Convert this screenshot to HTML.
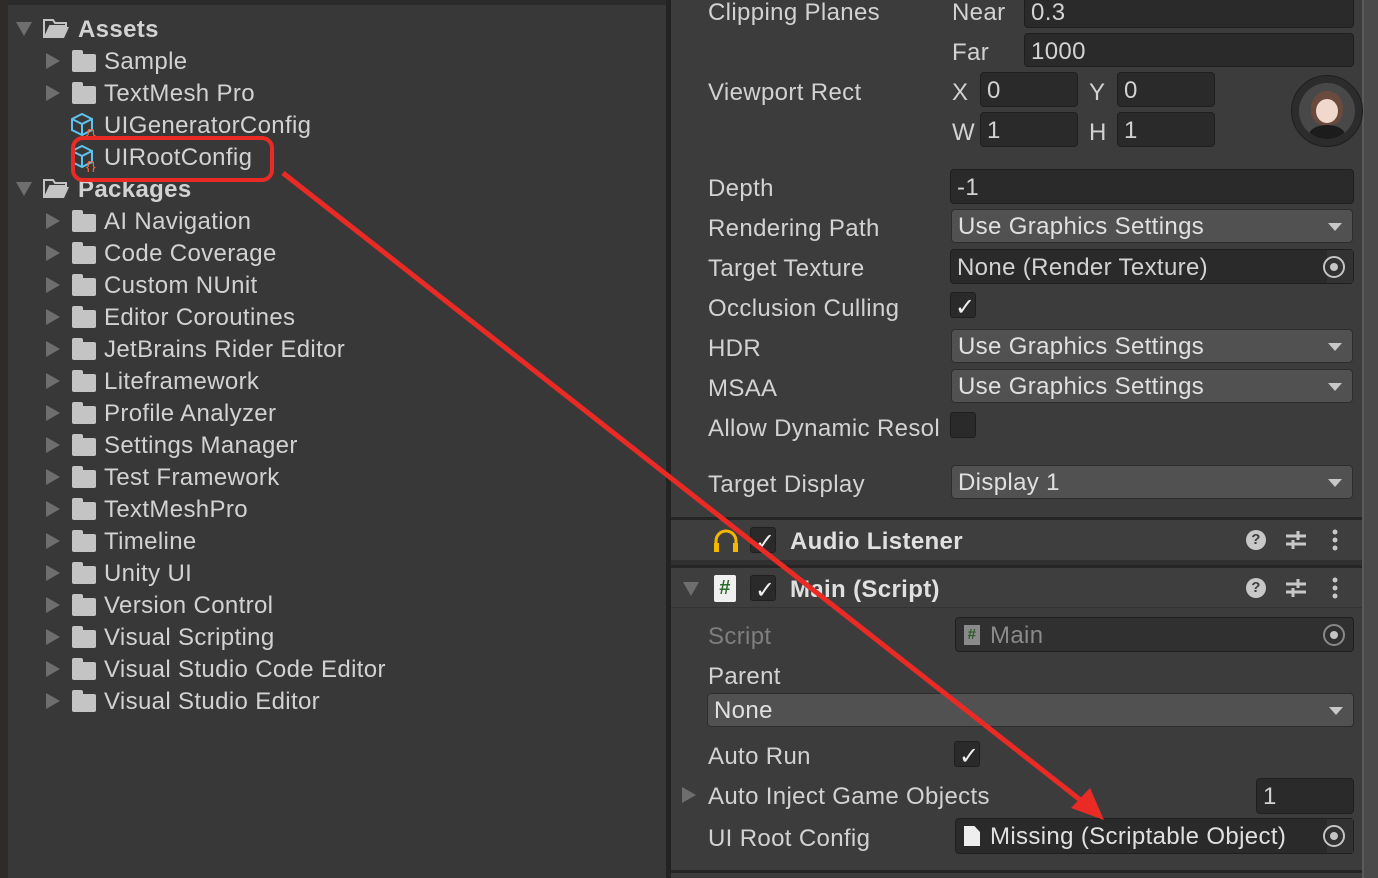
<!DOCTYPE html>
<html><head><meta charset="utf-8"><style>
body{margin:0;width:1378px;height:878px;overflow:hidden;background:#383838;font-family:"Liberation Sans",sans-serif;color:#d2d2d2;font-size:24px;letter-spacing:0.35px;position:relative}
.a{position:absolute;white-space:nowrap}
.t{line-height:32px;margin-top:2px}
.fld{position:absolute;background:#2a2a2a;border:1px solid #1f1f1f;border-radius:4px;box-sizing:border-box;color:#d2d2d2;padding-left:6px;line-height:36px}
.dd{position:absolute;background:#515151;border:1px solid #2d2d2d;border-radius:4px;box-sizing:border-box;color:#e0e0e0;padding-left:6px;line-height:34px}
.dd:after{content:"";position:absolute;right:10px;top:13px;border-left:7px solid transparent;border-right:7px solid transparent;border-top:8px solid #c8c8c8}
.cb{position:absolute;width:26px;height:26px;background:#2a2a2a;border:1px solid #1f1f1f;border-radius:3px;box-sizing:border-box}
.tri{position:absolute;width:0;height:0;border-top:8px solid transparent;border-bottom:8px solid transparent;border-left:14px solid #6e6e6e}
.trd{position:absolute;width:0;height:0;border-left:8px solid transparent;border-right:8px solid transparent;border-top:14px solid #6e6e6e}
.fo{position:absolute;width:24px;height:18px;background:#c4c4c4;border-radius:2px}
.fo:before{content:"";position:absolute;left:0;top:-4px;width:11px;height:5px;background:#c4c4c4;border-radius:2px 2px 0 0}
.obj{position:absolute;width:22px;height:22px;border:2px solid #c4c4c4;border-radius:50%;box-sizing:border-box}
.obj:after{content:"";position:absolute;left:5px;top:5px;width:8px;height:8px;background:#c4c4c4;border-radius:50%}
.lbl{position:absolute;left:708px;line-height:32px;margin-top:2px;white-space:nowrap}
.ck{position:absolute;color:#eee;margin-top:2px}
</style></head><body>
<div class="a" style="left:0;top:0;width:8px;height:878px;background:#2e2b29"></div>
<div class="a" style="left:8px;top:0;width:658px;height:5px;background:#2b2b2b"></div>
<div class="trd" style="left:16px;top:22px"></div>
<svg class="a" style="left:42px;top:16px" width="28" height="24" viewBox="0 0 28 24"><path d="M2 4h9l2 3h11v3H8L3 21H2z" fill="none" stroke="#c4c4c4" stroke-width="2"/><path d="M7 11h20l-5 11H2z" fill="#c4c4c4"/></svg>
<div class="a t" style="left:78px;top:12px;font-weight:bold">Assets</div>
<div class="tri" style="left:46px;top:53px"></div><div class="fo" style="left:72px;top:54px"></div><div class="a t" style="left:104px;top:44px">Sample</div>
<div class="tri" style="left:46px;top:85px"></div><div class="fo" style="left:72px;top:86px"></div><div class="a t" style="left:104px;top:76px">TextMesh Pro</div>
<svg class="a" style="left:70px;top:112px" width="32" height="28" viewBox="0 0 32 28"><path d="M12 2l10 5v11l-10 5-10-5V7z M2 7l10 5 10-5 M12 12v11" fill="none" stroke="#5ec3f0" stroke-width="2"/><text x="16" y="27" font-size="14" fill="#ff6a30" font-family="Liberation Sans">{}</text></svg>
<div class="a t" style="left:104px;top:108px">UIGeneratorConfig</div>
<svg class="a" style="left:70px;top:144px" width="32" height="28" viewBox="0 0 32 28"><path d="M12 2l10 5v11l-10 5-10-5V7z M2 7l10 5 10-5 M12 12v11" fill="none" stroke="#5ec3f0" stroke-width="2"/><text x="16" y="27" font-size="14" fill="#ff6a30" font-family="Liberation Sans">{}</text></svg>
<div class="a t" style="left:104px;top:140px">UIRootConfig</div>
<div class="trd" style="left:16px;top:182px"></div>
<svg class="a" style="left:42px;top:176px" width="28" height="24" viewBox="0 0 28 24"><path d="M2 4h9l2 3h11v3H8L3 21H2z" fill="none" stroke="#c4c4c4" stroke-width="2"/><path d="M7 11h20l-5 11H2z" fill="#c4c4c4"/></svg>
<div class="a t" style="left:78px;top:172px;font-weight:bold">Packages</div>
<div id="pk"></div>
<script>
var n=["AI Navigation","Code Coverage","Custom NUnit","Editor Coroutines","JetBrains Rider Editor","Liteframework","Profile Analyzer","Settings Manager","Test Framework","TextMeshPro","Timeline","Unity UI","Version Control","Visual Scripting","Visual Studio Code Editor","Visual Studio Editor"],h="";
n.forEach(function(s,i){var y=204+i*32;h+='<div class="tri" style="left:46px;top:'+(y+9)+'px"></div><div class="fo" style="left:72px;top:'+(y+10)+'px"></div><div class="a t" style="left:104px;top:'+y+'px">'+s+'</div>'});
document.getElementById("pk").outerHTML=h;
</script>
<div class="a" style="left:666px;top:0;width:5px;height:878px;background:#232323"></div>
<div class="a" style="left:671px;top:0;width:691px;height:878px;background:#3c3c3c"></div>
<div class="a" style="left:1362px;top:0;width:16px;height:878px;background:#5a5a5a"></div>
<div class="a" style="left:1364px;top:0;width:14px;height:878px;background:#4a4a4a"></div>
<div class="lbl" style="top:-5px">Clipping Planes</div>
<div class="lbl" style="left:952px;top:-5px">Near</div>
<div class="fld" style="left:1024px;top:-6px;width:330px;height:34px">0.3</div>
<div class="lbl" style="left:952px;top:35px">Far</div>
<div class="fld" style="left:1024px;top:33px;width:330px;height:34px">1000</div>
<div class="lbl" style="top:75px">Viewport Rect</div>
<div class="lbl" style="left:952px;top:75px">X</div><div class="fld" style="left:980px;top:72px;width:98px;height:35px">0</div>
<div class="lbl" style="left:1089px;top:75px">Y</div><div class="fld" style="left:1117px;top:72px;width:98px;height:35px">0</div>
<div class="lbl" style="left:952px;top:115px">W</div><div class="fld" style="left:980px;top:112px;width:98px;height:35px">1</div>
<div class="lbl" style="left:1089px;top:115px">H</div><div class="fld" style="left:1117px;top:112px;width:98px;height:35px">1</div>
<div class="a" style="left:1291px;top:75px;width:72px;height:72px;border-radius:50%;background:#2c2c2c;border:1px solid #1e1e1e;box-sizing:border-box"></div>
<div class="a" style="left:1299px;top:83px;width:56px;height:56px;border-radius:50%;background:#484848;overflow:hidden"><div class="a" style="left:12px;top:8px;width:32px;height:34px;border-radius:50% 50% 40% 40%;background:#6b4a3e"></div><div class="a" style="left:17px;top:16px;width:22px;height:24px;border-radius:50%;background:#f1d8cc"></div><div class="a" style="left:10px;top:42px;width:36px;height:20px;border-radius:50% 50% 0 0;background:#1c1c1c"></div></div>
<div class="lbl" style="top:171px">Depth</div><div class="fld" style="left:950px;top:169px;width:404px;height:35px">-1</div>
<div class="lbl" style="top:211px">Rendering Path</div><div class="dd" style="left:951px;top:209px;width:402px;height:34px">Use Graphics Settings</div>
<div class="lbl" style="top:251px">Target Texture</div><div class="fld" style="left:950px;top:249px;width:404px;height:35px">None (Render Texture)<div class="a" style="right:0;top:0;width:26px;height:33px;background:#323232"></div><div class="obj" style="right:8px;top:6px"></div></div>
<div class="lbl" style="top:291px">Occlusion Culling</div><div class="cb" style="left:950px;top:292px"></div><div class="ck" style="left:955px;top:291px">✓</div>
<div class="lbl" style="top:331px">HDR</div><div class="dd" style="left:951px;top:329px;width:402px;height:34px">Use Graphics Settings</div>
<div class="lbl" style="top:371px">MSAA</div><div class="dd" style="left:951px;top:369px;width:402px;height:34px">Use Graphics Settings</div>
<div class="lbl" style="top:411px">Allow Dynamic Resol</div><div class="cb" style="left:950px;top:412px"></div>
<div class="lbl" style="top:467px">Target Display</div><div class="dd" style="left:951px;top:465px;width:402px;height:34px">Display 1</div>
<div class="a" style="left:671px;top:517px;width:691px;height:3px;background:#252525"></div>
<div class="a" style="left:671px;top:520px;width:691px;height:40px;background:#3e3e3e"></div>
<svg class="a" style="left:712px;top:527px" width="28" height="26" viewBox="0 0 28 26"><path d="M4 24V14a10 10 0 0 1 20 0v10" fill="none" stroke="#f5b800" stroke-width="3"/><rect x="2" y="16" width="5" height="9" fill="#f5b800"/><rect x="21" y="16" width="5" height="9" fill="#f5b800"/></svg>
<div class="cb" style="left:750px;top:527px"></div><div class="ck" style="left:755px;top:526px">✓</div>
<div class="a t" style="left:790px;top:524px;font-weight:bold;color:#e0e0e0">Audio Listener</div>
<div class="a" style="left:1246px;top:530px;width:20px;height:20px;border-radius:50%;background:#c8c8c8;color:#3e3e3e;font-size:15px;font-weight:bold;text-align:center;line-height:20px">?</div>
<svg class="a" style="left:1285px;top:529px" width="22" height="22" viewBox="0 0 22 22"><path d="M1 7h20M1 15h20M13 2v9M8 11v9" stroke="#c8c8c8" stroke-width="3"/></svg>
<svg class="a" style="left:1329px;top:529px" width="12" height="22" viewBox="0 0 12 22"><circle cx="6" cy="3" r="2.5" fill="#c8c8c8"/><circle cx="6" cy="11" r="2.5" fill="#c8c8c8"/><circle cx="6" cy="19" r="2.5" fill="#c8c8c8"/></svg>
<div class="a" style="left:671px;top:560px;width:691px;height:5px;background:#303030"></div>
<div class="a" style="left:671px;top:565px;width:691px;height:3px;background:#252525"></div>
<div class="a" style="left:671px;top:568px;width:691px;height:40px;background:#3e3e3e"></div>
<div class="a" style="left:671px;top:607px;width:691px;height:1px;background:#333"></div>
<div class="trd" style="left:683px;top:582px"></div>
<div class="a" style="left:714px;top:575px;width:22px;height:27px;background:#f0f0f0;border-radius:2px;color:#2f6b2f;font-weight:bold;font-size:20px;text-align:center;line-height:27px">#</div>
<div class="cb" style="left:750px;top:575px"></div><div class="ck" style="left:755px;top:574px">✓</div>
<div class="a t" style="left:790px;top:572px;font-weight:bold;color:#e0e0e0">Main (Script)</div>
<div class="a" style="left:1246px;top:578px;width:20px;height:20px;border-radius:50%;background:#c8c8c8;color:#3e3e3e;font-size:15px;font-weight:bold;text-align:center;line-height:20px">?</div>
<svg class="a" style="left:1285px;top:577px" width="22" height="22" viewBox="0 0 22 22"><path d="M1 7h20M1 15h20M13 2v9M8 11v9" stroke="#c8c8c8" stroke-width="3"/></svg>
<svg class="a" style="left:1329px;top:577px" width="12" height="22" viewBox="0 0 12 22"><circle cx="6" cy="3" r="2.5" fill="#c8c8c8"/><circle cx="6" cy="11" r="2.5" fill="#c8c8c8"/><circle cx="6" cy="19" r="2.5" fill="#c8c8c8"/></svg>
<div class="lbl" style="top:619px;color:#7e7e7e">Script</div>
<div class="fld" style="left:955px;top:617px;width:399px;height:35px;background:#303030;color:#8a8a8a;padding-left:34px"><div class="a" style="left:8px;top:7px;width:16px;height:20px;background:#8a8a8a;color:#2f5a2f;font-size:15px;font-weight:bold;text-align:center;line-height:20px">#</div>Main<div class="obj" style="right:8px;top:6px;border-color:#888"></div></div>
<div class="lbl" style="top:659px">Parent</div>
<div class="dd" style="left:707px;top:693px;width:647px;height:34px">None</div>
<div class="lbl" style="top:739px">Auto Run</div><div class="cb" style="left:954px;top:741px"></div><div class="ck" style="left:959px;top:740px">✓</div>
<div class="tri" style="left:682px;top:787px"></div>
<div class="lbl" style="top:779px">Auto Inject Game Objects</div>
<div class="fld" style="left:1256px;top:778px;width:98px;height:36px">1</div>
<div class="lbl" style="top:821px">UI Root Config</div>
<div class="fld" style="left:955px;top:818px;width:399px;height:36px;padding-left:34px;color:#e0e0e0"><div class="a" style="left:8px;top:7px;width:16px;height:20px;background:#eee;clip-path:polygon(0 0,65% 0,100% 30%,100% 100%,0 100%)"></div>Missing (Scriptable Object)<div class="a" style="right:0;top:0;width:26px;height:34px;background:#323232"></div><div class="obj" style="right:8px;top:6px"></div></div>
<div class="a" style="left:671px;top:870px;width:691px;height:3px;background:#252525"></div>
<svg class="a" style="left:0;top:0" width="1378" height="878"><rect x="73" y="138" width="199" height="42" rx="10" fill="none" stroke="#ea2b25" stroke-width="4"/><path d="M283 173L1088 806" stroke="#ea2b25" stroke-width="5"/><path d="M1104 820L1071 808L1090 788z" fill="#ea2b25"/></svg>
</body></html>
